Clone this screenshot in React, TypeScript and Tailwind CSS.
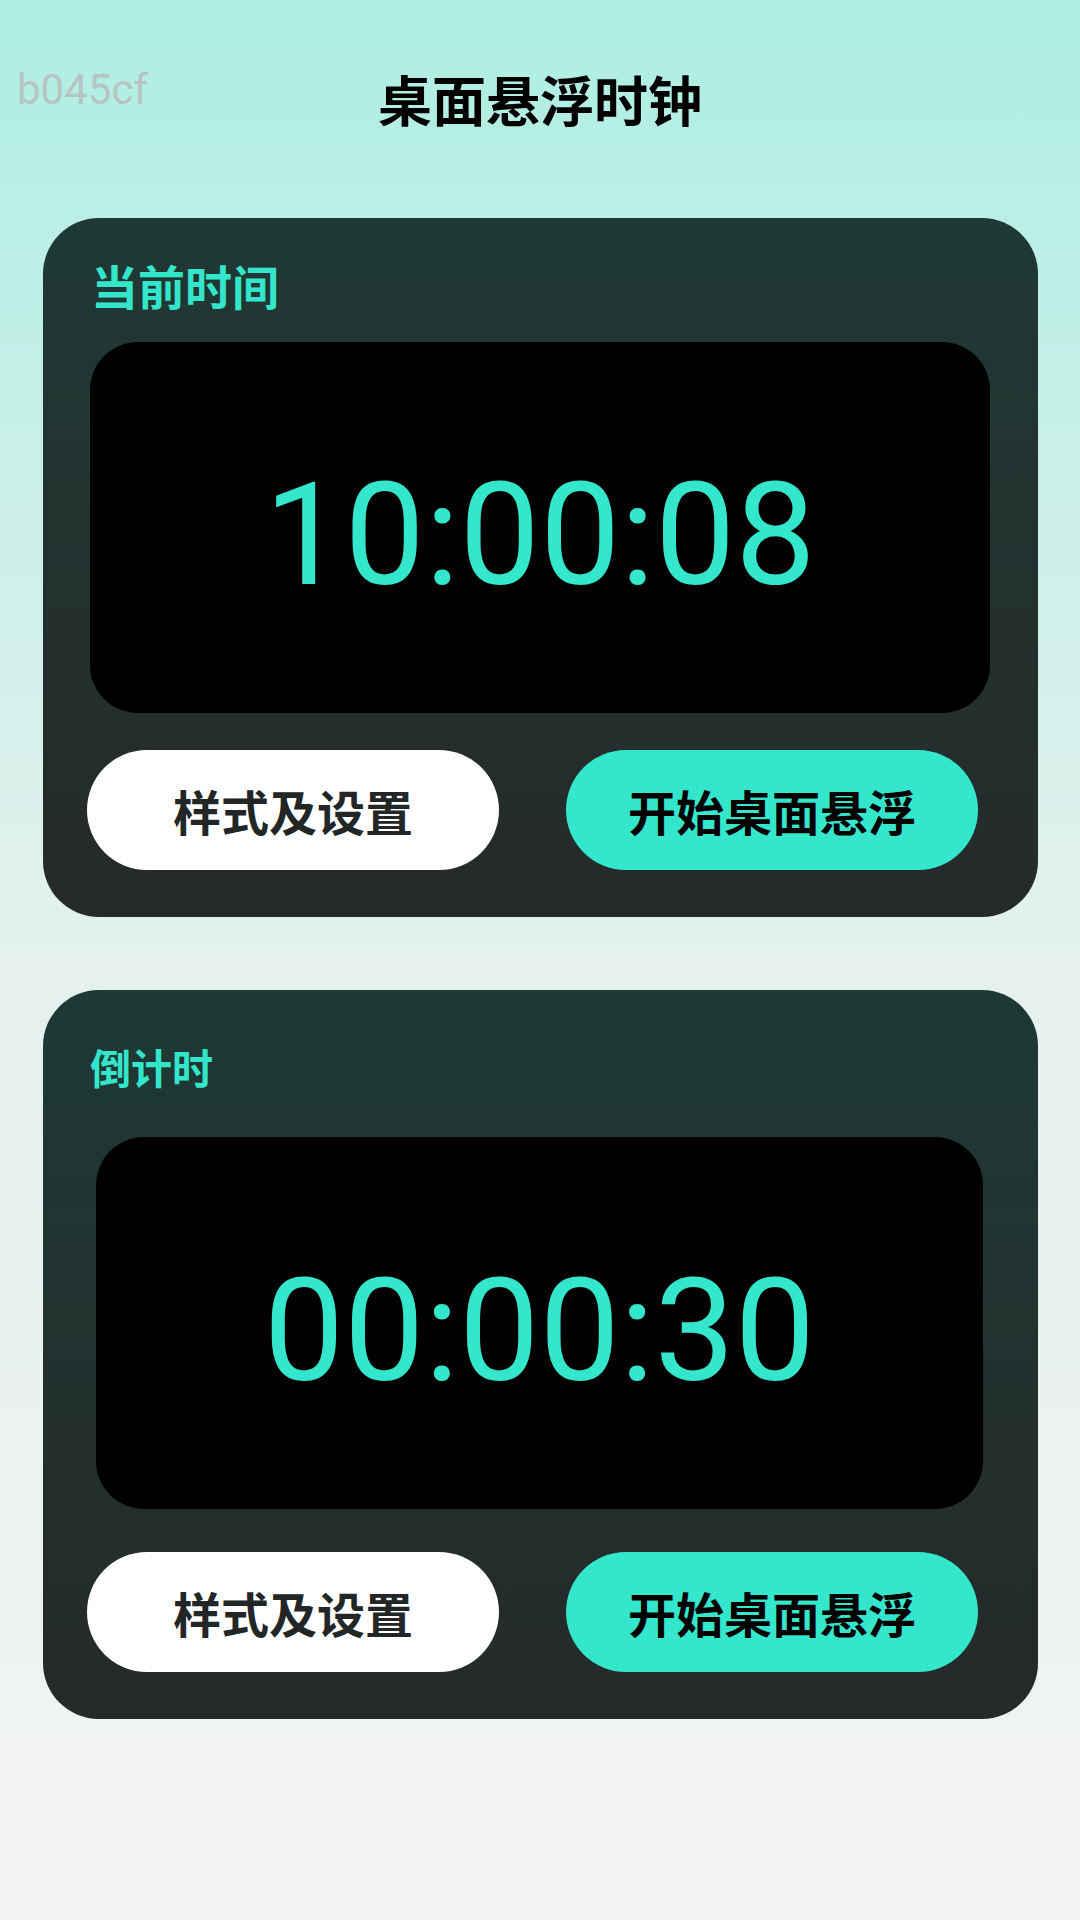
import React from "react";

const cjk = { fontFamily: '"Noto Sans CJK SC", "Noto Sans", sans-serif' };
const roboto = { fontFamily: 'Roboto, "Liberation Sans", sans-serif' };

function Buttons() {
  return (
    <div className="flex pl-[44px] pr-[60px] gap-[67px]">
      <button
        className="h-[120px] w-[412px] rounded-full bg-white text-[#222626] text-[48px] font-bold leading-none flex items-center justify-center"
        style={cjk}
      >
        样式及设置
      </button>
      <button
        className="h-[120px] w-[412px] rounded-full bg-[#34e7cc] text-black text-[48px] font-bold leading-none flex items-center justify-center"
        style={cjk}
      >
        开始桌面悬浮
      </button>
    </div>
  );
}

export default function App() {
  return (
    <div className="w-[1080px] min-h-[1920px] bg-gradient-to-b from-[#adeee2] via-[#e4f1ee] to-[#f2f3f2] flex flex-col">
      <div className="relative h-[150px] pt-[68px] flex justify-center">
        <span
          className="absolute left-[17px] top-[69px] text-[42px] leading-none text-[#b7c4c1]"
          style={roboto}
        >
          b045cf
        </span>
        <h1 className="text-[54px] font-bold leading-[62px] text-black" style={cjk}>
          桌面悬浮时钟
        </h1>
      </div>

      <div className="mt-[68px] mx-[43px] w-[995px] rounded-[56px] bg-gradient-to-b from-[#1f3934] to-[#252a2a] pt-[44px] pb-[47px] flex flex-col">
        <div className="pl-[48px] text-[47px] font-bold leading-[46px] text-[#33e5ca]" style={cjk}>
          当前时间
        </div>
        <div className="mt-[34px] ml-[47px] w-[900px] h-[371px] rounded-[48px] bg-black flex items-center justify-center pt-4">
          <span className="text-[143px] leading-none text-[#33e6cc]" style={roboto}>
            10:00:08
          </span>
        </div>
        <div className="mt-[37px]">
          <Buttons />
        </div>
      </div>

      <div className="mt-[73px] mx-[43px] w-[995px] rounded-[56px] bg-gradient-to-b from-[#1d3934] to-[#252a2a] pt-[56px] pb-[47px] flex flex-col">
        <div className="pl-[47px] text-[41px] font-bold leading-[40px] text-[#33e5ca]" style={cjk}>
          倒计时
        </div>
        <div className="mt-[51px] ml-[53px] w-[887px] h-[372px] rounded-[48px] bg-black flex items-center justify-center pt-4">
          <span className="text-[143px] leading-none text-[#33e6cc]" style={roboto}>
            00:00:30
          </span>
        </div>
        <div className="mt-[43px]">
          <Buttons />
        </div>
      </div>
    </div>
  );
}
